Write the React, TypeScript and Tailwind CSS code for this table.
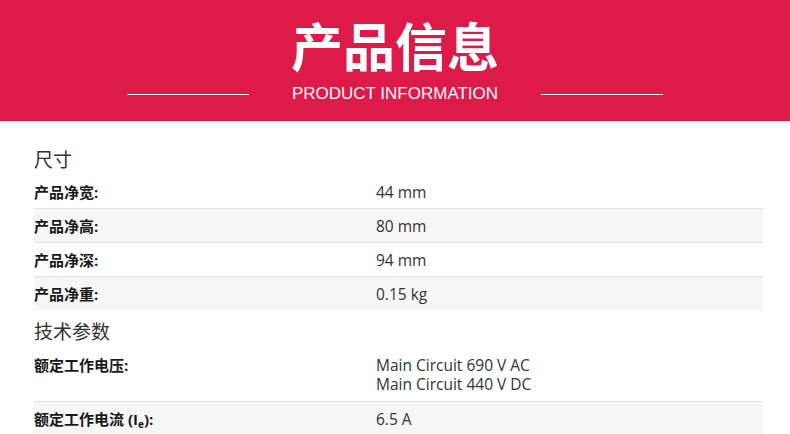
const dims = [
  { label: "产品净宽:", value: ["44 mm"] },
  { label: "产品净高:", value: ["80 mm"] },
  { label: "产品净深:", value: ["94 mm"] },
  { label: "产品净重:", value: ["0.15 kg"] },
];

const Row = ({
  label,
  value,
  shade,
  top,
  bottom,
  tall,
}: {
  label: React.ReactNode;
  value: string[];
  shade?: boolean;
  top?: boolean;
  bottom?: boolean;
  tall?: boolean;
}) => (
  <div
    className={`flex ${tall ? "pt-[9px] pb-[7px]" : "pt-[8px] pb-[6px]"} text-[15px] ${
      shade ? "bg-[#f6f6f6]" : "bg-white"
    } ${top ? "border-t border-[#e3e3e3]" : ""} ${bottom ? "border-b border-[#e3e3e3]" : ""}`}
  >
    <div className="w-[342px] shrink-0 font-bold leading-[19px] text-[#1a1a1a]">{label}</div>
    <div className="text-[15.5px] leading-[19px] text-[#333]">
      {value.map((v) => (
        <div key={v}>{v}</div>
      ))}
    </div>
  </div>
);

const App = () => {
  return (
    <div
      className="min-h-screen w-[790px] bg-white"
      style={{ fontFamily: '"Open Sans", "Noto Sans CJK SC", sans-serif' }}
    >
      {/* Header */}
      <header className="flex h-[121px] flex-col items-center bg-[#dd1a48] pt-[19px] text-white">
        <h1
          className="text-[52px] font-bold leading-[52px]"
          style={{ fontFamily: '"Noto Sans CJK SC", sans-serif' }}
        >
          产品信息
        </h1>
        <div className="mt-[13px] flex items-center">
          <span className="h-px w-[122px] bg-white" />
          <span
            className="mx-[43px] text-[17px] leading-[20px]"
            style={{ fontFamily: '"Liberation Sans", Arial, sans-serif' }}
          >
            PRODUCT INFORMATION
          </span>
          <span className="h-px w-[122px] bg-white" />
        </div>
      </header>

      <main className="pl-[34px] pr-[27px] pt-[26px]">
        {/* 尺寸 */}
        <h2 className="mb-[2px] text-[19px] leading-[26px] text-[#333]">尺寸</h2>
        {dims.map((d, i) => (
          <Row key={d.label} label={d.label} value={d.value} shade={i % 2 === 1} top={i > 0} />
        ))}

        {/* 技术参数 */}
        <h2 className="mb-[2px] mt-[9px] text-[19px] leading-[26px] text-[#333]">技术参数</h2>
        <Row label="额定工作电压:" value={["Main Circuit 690 V AC", "Main Circuit 440 V DC"]} tall />
        <Row
          label={
            <>
              额定工作电流 (I
              <span className="relative top-[3px] text-[10px] leading-none">e</span>):
            </>
          }
          value={["6.5 A"]}
          shade
          top
          bottom
        />
      </main>
    </div>
  );
};

export default App;
